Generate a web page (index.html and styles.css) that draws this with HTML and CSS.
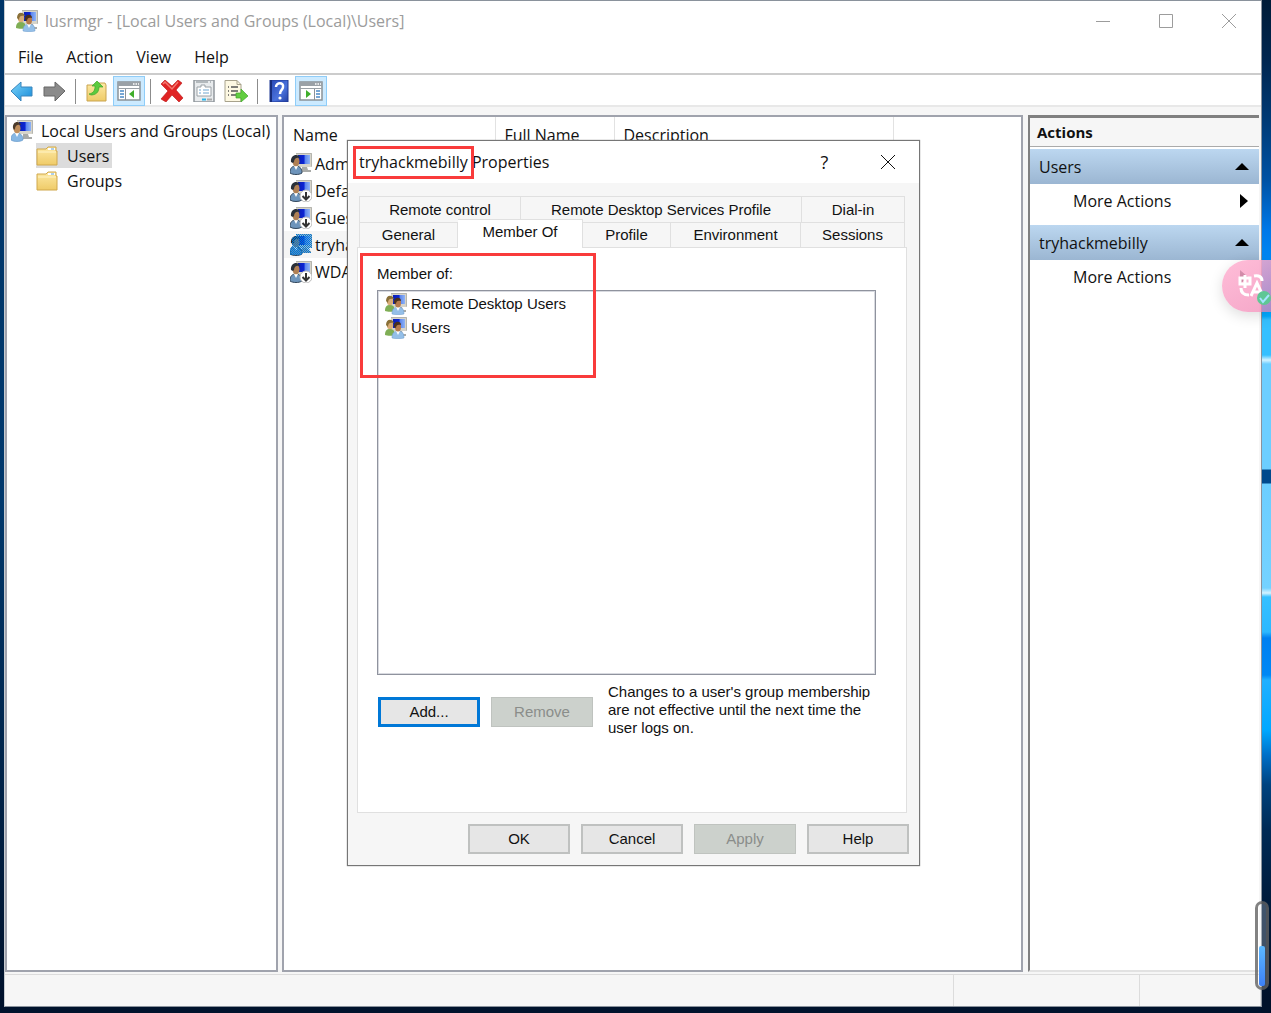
FILE: index.html
```html
<!DOCTYPE html>
<html lang="en">
<head>
<meta charset="utf-8">
<title>lusrmgr</title>
<link rel="stylesheet" href="styles.css">
</head>
<body>
<svg class="sprite" aria-hidden="true">
  <defs>
    <linearGradient id="screen" x1="0" y1="0" x2="1" y2="0"><stop offset="0" stop-color="#0a1fb4"/><stop offset=".5" stop-color="#0c24d4"/><stop offset=".6" stop-color="#5c86ee"/><stop offset="1" stop-color="#8fb4f6"/></linearGradient>
    <linearGradient id="folder" x1="0" y1="0" x2="0" y2="1"><stop offset="0" stop-color="#fde9a4"/><stop offset="1" stop-color="#efcb68"/></linearGradient>
    <linearGradient id="blue" x1="0" y1="0" x2="1" y2="1"><stop offset="0" stop-color="#7fd6fa"/><stop offset="1" stop-color="#1489d8"/></linearGradient>
    <linearGradient id="help" x1="0" y1="0" x2="1" y2="1"><stop offset="0" stop-color="#2747b4"/><stop offset=".6" stop-color="#4a72dc"/><stop offset="1" stop-color="#2441a4"/></linearGradient>
    <pattern id="dither" width="2" height="2" patternUnits="userSpaceOnUse"><path d="M0 0h1v1H0zM1 1h1v1H1z" fill="#0078d7"/></pattern>
    <symbol id="monitor" viewBox="0 0 22 22">
      <path d="M6 0h16v14H6z" fill="#d6d4ca"/><path d="M6 .5h15.500v13" fill="none" stroke="#b4b4ae"/>
      <path d="M8 2h12v9H8z" fill="url(#screen)"/><path d="M12 14h5l1 3h3v2h-9z" fill="#a8aaa8"/>
    </symbol>
    <symbol id="user" viewBox="0 0 22 22">
      <use href="#monitor"/>
      <path d="M0 20c0-5 2-7 6-7s6 3 6 7c-3 2-9 2-12 0z" fill="#86b7e4" stroke="#5b90c4" stroke-width=".6"/>
      <path d="M4 13l2 4 2-4z" fill="#fff"/><ellipse cx="6" cy="8.500" rx="3.500" ry="4.800" fill="#c08e5c"/>
      <path d="M2 8c-1-7 7-8 8-3-3-1-6 0-6 4l-1 1z" fill="#4b3a2a"/>
    </symbol>
    <symbol id="account" viewBox="0 0 22 22">
      <use href="#monitor"/>
      <path d="M0 20c0-5 2-7 6-7s6 3 6 7c-3 2-9 2-12 0z" fill="#6d94bb" stroke="#33475c"/>
      <path d="M4 13l2 4 2-4z" fill="#fff"/><ellipse cx="6" cy="8.500" rx="3.500" ry="4.800" fill="#b08054"/>
      <path d="M1 9c-1-8 8-9 9-4-3-1-6 0-6 4l-1 1z" fill="#2a3038"/>
    </symbol>
    <symbol id="disabled" viewBox="0 0 22 22">
      <use href="#account"/><circle cx="16" cy="16" r="6" fill="#fff" stroke="#bbb"/>
      <path d="M16 12v7M12.500 16l3.500 3.500 3.500-3.500" fill="none" stroke="#333" stroke-width="2"/>
    </symbol>
    <symbol id="chosen" viewBox="0 0 22 22">
      <use href="#account"/><path d="M6 0h16v14h-3l2 5h-9v2H0v-6l2-3V4l4-2z" fill="#0078d7" opacity=".25"/><path d="M6 0h16v14h-3l2 5h-9v2H0v-6l2-3V4l4-2z" fill="url(#dither)"/>
    </symbol>
    <symbol id="group" viewBox="0 0 22 22">
      <use href="#monitor"/>
      <path d="M0 18c0-5 2-6 5-6s5 2 5 6c-2 1-8 1-10 0z" fill="#7fae55"/><ellipse cx="5" cy="8" rx="3.200" ry="4.200" fill="#d9ad78"/><path d="M1 8c0-6 6-7 8-2-4-1-6 0-6 4z" fill="#8a7038"/>
      <path d="M7 21c0-5 2-7 6-7s6 2 6 7c-3 1-9 1-12 0z" fill="#94bfe8" stroke="#6b9aca" stroke-width=".5"/><path d="M11 14l2 4 2-4z" fill="#fff"/>
      <ellipse cx="13" cy="10" rx="3" ry="4.500" fill="#b67a4c"/><path d="M9 10c-1-6 7-7 7-2-3-1-5 0-5 3z" fill="#49301e"/>
    </symbol>
    <symbol id="folder-icon" viewBox="0 0 22 20">
      <path d="M1 3h9l2-2h8v4h1v14H1z" fill="url(#folder)" stroke="#d0a84c"/><path d="M12 3h7" stroke="#fff" stroke-width="2"/><path d="M15 3h3" stroke="#5a9fd8"/><path d="M2 6h18" stroke="#fff3c4"/>
    </symbol>
    <symbol id="arrow" viewBox="0 0 24 22">
      <path d="M1 11L11 2v5h11v9H11v5z" stroke-linejoin="round"/>
    </symbol>
    <symbol id="pane" viewBox="0 0 24 20">
      <path d="M1 1h22v18H1z" fill="#fff" stroke="#8b9298" stroke-width="1.500"/><path d="M1 1h22v4H1z" fill="#9aa1a7"/><path d="M16 3h1.500M18.500 3H20M21 3h1" stroke="#fff" stroke-width="1.500"/><path d="M1 7.500h22" stroke="#9aa1a7"/>
    </symbol>
  </defs>
</svg>

<main class="window">
  <header class="titlebar">
    <svg class="icon"><use href="#group"/></svg>
    <h1>lusrmgr - [Local Users and Groups (Local)\Users]</h1>
    <div class="controls">
      <button type="button" aria-label="Minimize"><svg viewBox="0 0 16 16"><path d="M1 8.500h14"/></svg></button>
      <button type="button" aria-label="Maximize"><svg viewBox="0 0 16 16"><path d="M1.500 1.500h13v13h-13z"/></svg></button>
      <button type="button" aria-label="Close"><svg viewBox="0 0 16 16"><path d="M1 1l14 14M15 1L1 15"/></svg></button>
    </div>
  </header>
  <nav class="menubar">
    <button type="button">File</button><button type="button">Action</button><button type="button">View</button><button type="button">Help</button>
  </nav>
  <div class="toolbar">
    <button type="button" aria-label="Back"><svg viewBox="0 0 24 22" fill="url(#blue)" stroke="#3a86bd"><use href="#arrow"/></svg></button>
    <button type="button" aria-label="Forward"><svg class="flip" viewBox="0 0 24 22" fill="#8a8a8a" stroke="#666"><use href="#arrow"/></svg></button>
    <i class="divider"></i>
    <button type="button" aria-label="Up one level"><svg viewBox="0 0 24 22"><path d="M2 5h9l2-2h7l1 2v16H2z" fill="url(#folder)" stroke="#c9a450"/><path d="M4 14c5-1 6-4 6-8H7l5-5 6 6h-4c0 6-4 8-8 8z" fill="#5ccb3e" stroke="#3fa52b" stroke-width=".7"/></svg></button>
    <button type="button" class="on" aria-label="Console tree"><svg viewBox="0 0 24 20"><use href="#pane"/><path d="M8.500 8v11" stroke="#8b9298"/><path d="M3 10h4M3 13h4M3 16h4" stroke="#4b8ac6" stroke-width="1.500"/><path d="M17 9v8l-5-4z" fill="#3fae2a"/></svg></button>
    <i class="divider"></i>
    <button type="button" aria-label="Delete"><svg viewBox="0 0 24 22"><path d="M1 4l4-4 7 6 6-6 4 3-6 7 7 8-4 4-7-7-6 7-5-3 7-8z" fill="#e02424" stroke="#b81414" stroke-width=".6"/><path d="M3 4l2-2 7 7 6-7" fill="none" stroke="#f47a70" stroke-width="1.500"/></svg></button>
    <button type="button" aria-label="Properties"><svg viewBox="0 0 24 22"><path d="M2 0h20v22H2z" fill="#e8ebed" stroke="#90979c" stroke-width="1.500"/><path d="M4 2h16" stroke="#7f878c" stroke-dasharray="12 2 1 1"/><path d="M5 7h4V5h4v2h6v9H5z" fill="#fff" stroke="#9aa1a6"/><path d="M7 10h2M7 13h2M11 10h6M11 13h6" stroke="#6fa5cf"/><path d="M10 19.500h4" stroke="#27b5ea" stroke-width="2"/><path d="M15 19.500h5" stroke="#aaa" stroke-width="2"/></svg></button>
    <button type="button" aria-label="Export list"><svg viewBox="0 0 24 22"><path d="M1 .5h12l4 4V21.500H1z" fill="#fdf8e2" stroke="#a8a28c"/><path d="M13 .5v4h4" fill="none" stroke="#a8a28c"/><path d="M4 7h1M4 11h1M4 15h1M7 7h7M7 11h7M7 15h7" stroke="#555" stroke-width="1.500"/><path d="M12 13h5v-4l7 7-7 6v-4h-5z" fill="#62cd40" stroke="#42a62c" stroke-width=".7"/></svg></button>
    <i class="divider"></i>
    <button type="button" aria-label="Help topics"><svg viewBox="0 0 24 22"><path d="M3 0h18v22H3z" fill="url(#help)" stroke="#1e3994"/><path d="M4 0v22" stroke="#182d7a" stroke-width="2"/><path d="M9 7c0-5 8-5 7 0 0 3-3 3-3 7" fill="none" stroke="#fff" stroke-width="2.500"/><circle cx="13" cy="18" r="1.600" fill="#fff"/></svg></button>
    <button type="button" class="on" aria-label="Action pane"><svg viewBox="0 0 24 20"><use href="#pane"/><path d="M15.500 8v11" stroke="#8b9298"/><path d="M17 10h4M17 13h4M17 16h4" stroke="#4b8ac6" stroke-width="1.500"/><path d="M7 9v8l5-4z" fill="#3fae2a"/></svg></button>
  </div>

  <div class="panes">
    <section class="tree" aria-label="Console tree">
      <div class="node"><svg class="icon"><use href="#user"/></svg>Local Users and Groups (Local)</div>
      <div class="node child selected"><svg class="icon"><use href="#folder-icon"/></svg>Users</div>
      <div class="node child"><svg class="icon"><use href="#folder-icon"/></svg>Groups</div>
    </section>

    <section class="list" aria-label="Users">
      <table>
        <colgroup><col class="c-name"><col class="c-full"><col class="c-desc"><col></colgroup>
        <thead><tr><th>Name</th><th>Full Name</th><th>Description</th><td></td></tr></thead>
        <tbody>
          <tr><td><span><svg class="icon"><use href="#account"/></svg>Administrator</span></td></tr>
          <tr><td><span><svg class="icon"><use href="#disabled"/></svg>DefaultAccount</span></td></tr>
          <tr><td><span><svg class="icon"><use href="#disabled"/></svg>Guest</span></td></tr>
          <tr class="current"><td><span><svg class="icon"><use href="#chosen"/></svg>tryhackmebilly</span></td></tr>
          <tr><td><span><svg class="icon"><use href="#disabled"/></svg>WDAGUtility</span></td></tr>
        </tbody>
      </table>
    </section>

    <aside class="actions">
      <h2>Actions</h2>
      <h3>Users <i class="up"></i></h3>
      <button type="button">More Actions <i class="right"></i></button>
      <h3>tryhackmebilly <i class="up"></i></h3>
      <button type="button">More Actions <i class="right"></i></button>
    </aside>
  </div>
  <footer class="statusbar"><span></span><span></span><span></span></footer>
</main>

<section class="dialog" role="dialog" aria-labelledby="dialog-title">
  <header>
    <h2 id="dialog-title">tryhackmebilly Properties</h2>
    <button type="button" aria-label="What's this">?</button>
    <button type="button" aria-label="Close dialog"><svg viewBox="0 0 16 16"><path d="M1 1l14 14M15 1L1 15"/></svg></button>
  </header>
  <div class="tabs" role="tablist">
    <div class="tabrow back">
      <button type="button" role="tab">Remote control</button><button type="button" role="tab">Remote Desktop Services Profile</button><button type="button" role="tab">Dial-in</button>
    </div>
    <div class="tabrow front">
      <button type="button" role="tab">General</button><button type="button" role="tab" class="active" aria-selected="true">Member Of</button><button type="button" role="tab">Profile</button><button type="button" role="tab">Environment</button><button type="button" role="tab">Sessions</button>
    </div>
  </div>
  <div class="sheet">
    <p class="label" id="members">Member of:</p>
    <ul aria-labelledby="members">
      <li><svg class="icon"><use href="#group"/></svg>Remote Desktop Users</li>
      <li><svg class="icon"><use href="#group"/></svg>Users</li>
    </ul>
    <div class="edit">
      <button type="button" class="push default">Add...</button>
      <button type="button" class="push" disabled>Remove</button>
      <p>Changes to a user's group membership are not effective until the next time the user logs on.</p>
    </div>
  </div>
  <footer>
    <button type="button" class="push">OK</button>
    <button type="button" class="push">Cancel</button>
    <button type="button" class="push" disabled>Apply</button>
    <button type="button" class="push">Help</button>
  </footer>
  <div class="mark mark-title"></div>
  <div class="mark mark-members"></div>
</section>

<button type="button" class="translate" aria-label="Translate">
  <svg viewBox="0 0 49 52"><g fill="none" stroke="#fff" stroke-width="3"><path d="M18 18h10v6H18zM23 15v13M32 16c5-1 8 1 8 5M19 28c0 5 3 7 8 7"/><path d="M29 36l6-13 6 13M31 32h8"/></g><circle cx="42" cy="38" r="7" fill="#5fc795"/><path d="M38 38l3 4 6-7" fill="none" stroke="#a6e4ff" stroke-width="2"/></svg>
</button>
<div class="gauge"><i></i></div>
</body>
</html>
```
FILE: styles.css
```css
* { box-sizing: border-box; }
html { height: 100%; }
body {
  margin: 0;
  min-height: 100%;
  display: flex;
  padding: 0 9px 6px 4px;
  position: relative;
  overflow: hidden;
  font: 16px/24px "Open Sans", "Noto Sans", sans-serif;
  color: #111;
  background:
    linear-gradient(#001c38 0, #002650 60px, #003a75 120px, #0052a4 180px, #0078e8 230px, #0098ff 290px, #00aaff 316px, #35c0ff 320px, #35c0ff 355px, #d4f3ff 360px, #6cceff 364px, #6cceff 469px, #00498c 470px, #00498c 483px, #6cceff 484px, #74d2ff 588px, #d4f3ff 593px, #35c0ff 597px, #2cb8ff 632px, #0080f0 638px, #0088f5 675px, #20b0ff 680px, #00a8ff 730px, #0070c8 755px, #00437f 785px, #002a55 830px, #001c3c 900px, #00112a 1000px) right / 10px 100% no-repeat,
    linear-gradient(#003568, #00386c 500px, #00122c 1000px);
}
h1, h2, h3, p, ul { margin: 0; padding: 0; font-weight: 400; font-size: inherit; }
ul { list-style: none; }
button { font: inherit; color: inherit; border: 0; background: none; padding: 0; }
.sprite { position: absolute; width: 0; height: 0; }
.icon { width: 22px; height: 22px; flex: none; }

.window { flex: 1; display: flex; flex-direction: column; min-width: 0; background: #f6f6f6; border: 1px solid #8a929c; border-left-color: #c8ccd0; }
.titlebar { display: flex; align-items: center; height: 39px; padding-left: 11px; gap: 7px; background: #fff; color: #9c9c9c; }
.titlebar h1 { flex: 1; }
.controls { display: flex; padding-right: 1px; }
.controls button { width: 63px; height: 38px; }
.controls svg { width: 16px; height: 16px; fill: none; stroke: #9c9c9c; display: block; margin: auto; }
.menubar { display: flex; gap: 23px; padding-left: 13px; height: 35px; align-items: center; background: #fff; border-bottom: 2px solid #ccc; }
.toolbar { display: flex; align-items: center; height: 32px; padding: 2px 0 0 1px; background: #fff; border-bottom: 2px solid #e8e8e8; }
.toolbar button { width: 32px; height: 30px; padding: 3px; display: flex; align-items: center; justify-content: center; }
.toolbar svg { width: 24px; height: 22px; }
.toolbar .flip { transform: scaleX(-1); }
.toolbar .on { background: #cceaff; border: 1px solid #90cdf8; }
.divider { width: 1px; height: 25px; margin: 0 5px; background: #8c8c8c; }

.panes { flex: 1; display: grid; grid-template-columns: 273px minmax(0, 1fr) 232px; gap: 4px; padding: 8px 2px 2px 0; }
.tree, .list { background: #fff; border: 2px solid #a0a3ad; }
.tree { padding: 1px 0 0 4px; }
.node { display: flex; align-items: center; height: 25px; gap: 8px; white-space: nowrap; }
.child { margin-left: 25px; gap: 9px; width: 76px; }
.child .icon { height: 20px; }
.selected { background: #dcdcdc; }

table { width: 100%; table-layout: fixed; border-collapse: collapse; }
.c-name { width: 211px; }
.c-full { width: 119px; }
.c-desc { width: 279px; }
th, thead td { height: 33px; padding: 3px 0 0 9px; text-align: left; font-weight: 400; }
th { border-right: 1px solid #e2e2e2; }
tbody td { height: 27px; padding: 0 0 0 6px; }
tbody span { display: flex; align-items: center; gap: 3px; }
.current { background: #f5f5f5; }

.actions { background: #fff; border: solid #808080; border-width: 3px 0 2px 2px; border-bottom-color: #e2e2e2; margin-left: 1px; display: flex; flex-direction: column; }
.actions h2 { height: 29px; padding-left: 7px; font-weight: 700; font-size: 15px; line-height: 28px; background: #f6f6f6; border-bottom: 1px solid #aaa; margin-bottom: 2px; }
.actions h3, .actions button { display: flex; align-items: center; justify-content: space-between; height: 35px; padding: 0 10px 0 9px; }
.actions h3 { background: linear-gradient(#bcd7f0, #9bb6d2); }
.actions button { height: 34px; padding-left: 43px; margin-bottom: 7px; }
.up { border: solid transparent; border-width: 0 7px 7px; border-bottom-color: #000; }
.right { border: solid transparent; border-width: 7px 0 7px 8px; border-left-color: #000; margin-right: 1px; }
.statusbar { display: grid; grid-template-columns: minmax(0, 1fr) 186px 121px; height: 32px; border-top: 1px solid #dcdcdc; }
.statusbar span { border-right: 1px solid #dcdcdc; }

.dialog { position: absolute; left: 347px; top: 140px; width: 573px; display: flex; flex-direction: column; background: #f6f6f6; border: 1px solid #767676; box-shadow: 0 0 1px #767676; padding: 0 10px 11px 9px; font: 15px/18px "Liberation Sans", Arial, sans-serif; }
.dialog header { display: flex; align-items: center; height: 42px; margin: 0 -10px 13px -9px; padding-left: 11px; background: #fff; font: 16px/24px "Open Sans", "Noto Sans", sans-serif; }
.dialog header h2 { flex: 1; }
.dialog header button { width: 63px; height: 38px; font-size: 18px; }
.dialog header svg { width: 16px; height: 16px; display: block; margin: auto; stroke: #111; }
.tabs { padding: 0 4px 0 2px; }
.tabrow { display: grid; height: 26px; }
.front { height: 25px; }
.back { grid-template-columns: 162fr 281fr 103fr; }
.front { grid-template-columns: 99fr 125fr 88fr 130fr 104fr; }
.tabrow button { border: solid #e0e0e0; border-width: 1px 1px 0 0; }
.tabrow button:first-child { border-left-width: 1px; }
.tabrow .active { background: #fff; margin: -3px 0 -1px; padding-bottom: 4px; z-index: 1; }
.sheet { background: #fff; border: 1px solid #e0e0e0; height: 566px; margin-right: 2px; padding: 17px 30px 0 19px; }
.label { margin-bottom: 7px; }
.sheet ul { height: 385px; border: 1px solid #8f939e; outline: 1px solid #d8dae0; outline-offset: -2px; padding: 1px 7px; }
.sheet li { display: flex; align-items: center; gap: 4px; height: 24px; }
.edit { display: flex; align-items: flex-start; gap: 11px; padding: 22px 0 0 1px; }
.edit p { flex: 1; margin: -14px -8px 0 4px; }
.push { width: 102px; height: 30px; background: #e6e6e6; border: 2px solid #bfc1c0; }
.push.default { border: 3px solid #0078d7; }
.push:disabled { background: #ccd1cc; border: 1px solid #bfc3bf; color: #8a8d8a; }
.dialog footer { display: flex; justify-content: flex-end; gap: 11px; padding-top: 11px; }
.mark { position: absolute; border: 3px solid #f93b3b; }
.mark-title { left: 5px; top: 5px; width: 121px; height: 33px; }
.mark-members { left: 12px; top: 112px; width: 236px; height: 125px; }

.translate { position: absolute; right: 0; top: 260px; width: 49px; height: 52px; border-radius: 26px 0 0 26px; background: linear-gradient(150deg, #ffb6d4e6, #f080b0b0); box-shadow: 0 4px 14px #0002; }
.translate svg { width: 49px; height: 52px; display: block; }
.gauge { position: absolute; right: 2px; bottom: 23px; width: 14px; height: 89px; border: 3px solid #555b; border-radius: 7px; background: #ffffff40; display: flex; align-items: flex-end; justify-content: center; padding-bottom: 1px; }
.gauge i { width: 6px; height: 40px; border-radius: 2px; background: linear-gradient(#5cb8ff, #3c80f8); }
```
